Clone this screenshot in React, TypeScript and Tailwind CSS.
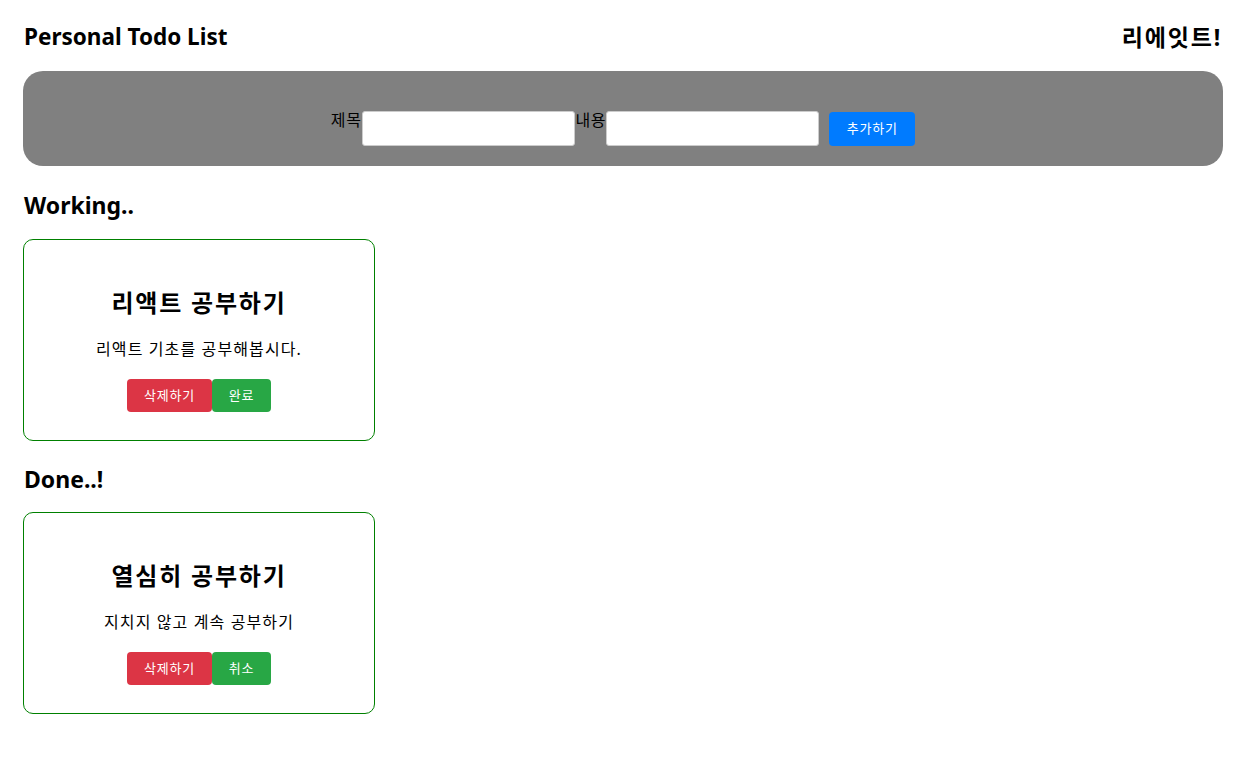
import React from "react";

const font = { fontFamily: '"Noto Sans", "Noto Sans CJK KR", sans-serif' };

function Card({ title, desc, action }: { title: string; desc: string; action: string }) {
  return (
    <div className="w-[352px] h-[202px] border border-[#008000] rounded-[10px] flex flex-col items-center">
      <h3 className="mt-[47px] text-[24px] leading-[32px] font-bold text-black tracking-[0.075em]">{title}</h3>
      <p className="mt-[18px] text-[16px] leading-[24px] text-black tracking-[0.07em]">{desc}</p>
      <div className="mt-[18px] flex">
        <button className="w-[85px] h-[33px] bg-[#dc3545] text-white text-[13px] rounded-[4px] tracking-[0.06em]">삭제하기</button>
        <button className="w-[59px] h-[33px] bg-[#28a745] text-white text-[13px] rounded-[4px] tracking-[0.06em]">{action}</button>
      </div>
    </div>
  );
}

export default function App() {
  return (
    <div className="bg-white min-h-[760px] px-[23px]" style={font}>
      <div className="w-[1200px]">
        <div className="pt-[22px] flex justify-between items-center h-[51px]">
          <h1 className="text-[22.5px] leading-[30px] font-bold pl-[1px]">Personal Todo List</h1>
          <div className="text-[23px] leading-[30px] font-bold pr-[1px] tracking-[0.08em]">리에잇트!</div>
        </div>
        <div className="mt-[20px] h-[95px] bg-[#808080] rounded-[20px] pt-[40px] flex justify-center items-start">
          <label className="text-[16px] leading-[20px] -mt-[1px] text-black tracking-[0.04em]">제목</label>
          <input className="w-[213px] h-[35px] bg-white border border-[#ccc] rounded-[3px]" />
          <label className="text-[16px] leading-[20px] -mt-[1px] ml-[1px] text-black tracking-[0.04em]">내용</label>
          <input className="w-[213px] h-[35px] bg-white border border-[#ccc] rounded-[3px]" />
          <button className="ml-[10px] mt-[1px] w-[86px] h-[34px] bg-[#007bff] text-white text-[13px] rounded-[4px] tracking-[0.06em]">추가하기</button>
        </div>
        <h2 className="mt-[24px] text-[23px] leading-[30px] font-bold pl-[1px]">Working..</h2>
        <div className="mt-[19px]">
          <Card title="리액트 공부하기" desc="리액트 기초를 공부해봅시다." action="완료" />
        </div>
        <h2 className="mt-[23px] text-[23px] leading-[30px] font-bold pl-[1px]">Done..!</h2>
        <div className="mt-[18px]">
          <Card title="열심히 공부하기" desc="지치지 않고 계속 공부하기" action="취소" />
        </div>
      </div>
    </div>
  );
}
